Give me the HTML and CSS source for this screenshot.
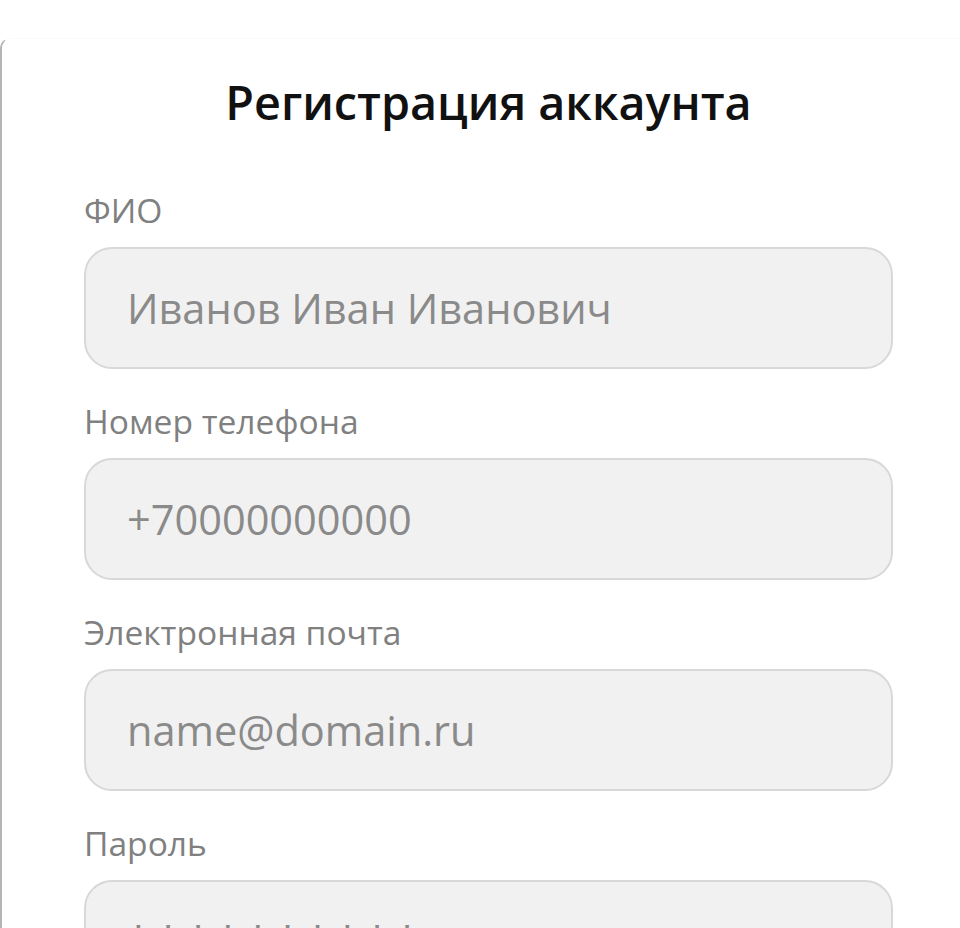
FILE: index.html
```html
<!DOCTYPE html>
<html lang="ru">
<head>
<meta charset="utf-8">
<title>Регистрация аккаунта</title>
<link rel="stylesheet" href="styles.css">
</head>
<body>
<main class="card">
  <h1 class="title">Регистрация аккаунта</h1>
  <form class="form">
    <label class="field">
      <span class="label">ФИО</span>
      <input class="input" type="text" placeholder="Иванов Иван Иванович">
    </label>
    <label class="field">
      <span class="label">Номер телефона</span>
      <input class="input" type="tel" placeholder="+70000000000">
    </label>
    <label class="field">
      <span class="label">Электронная почта</span>
      <input class="input" type="email" placeholder="name@domain.ru">
    </label>
    <label class="field">
      <span class="label">Пароль</span>
      <input class="input input-pass" type="password" placeholder="**********">
    </label>
  </form>
</main>
</body>
</html>
```

FILE: styles.css
```css
html, body {
  margin: 0;
  padding: 0;
  background: #ffffff;
}

body {
  font-family: "Open Sans", "Noto Sans", sans-serif;
}

.card {
  margin-top: 38px;
  border-left: 2px solid #b4b4b4;
  border-top: 1px solid #fbfbfb;
  border-top-left-radius: 10px;
  padding: 32px 67px 0 82px;
}

.title {
  margin: 0;
  font-size: 46.7px;
  line-height: 62px;
  font-weight: 600;
  color: #111111;
  text-align: center;
}

.form {
  margin-top: 55px;
  display: flex;
  flex-direction: column;
  gap: 30px;
}

.field {
  display: flex;
  flex-direction: column;
  gap: 15px;
}

.label {
  font-size: 33.6px;
  line-height: 44px;
  color: #808080;
}

.input {
  box-sizing: border-box;
  width: 100%;
  height: 122px;
  margin: 0;
  padding: 0 40px 0 41px;
  border: 2px solid #d8d8d8;
  border-radius: 28px;
  background: #f1f1f1;
  font-family: "Open Sans", "Noto Sans", sans-serif;
  font-size: 41.5px;
  color: #555555;
  outline: none;
}

.input::placeholder {
  color: #8a8a8a;
  opacity: 1;
}

.input-pass::placeholder {
  letter-spacing: 7px;
}
```
